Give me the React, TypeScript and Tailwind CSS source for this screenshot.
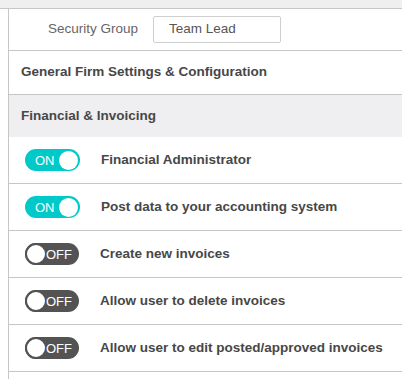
const font = { fontFamily: '"Liberation Sans", Arial, sans-serif' }

interface Permission {
  label: string
  on: boolean
}

const permissions: Permission[] = [
  { label: "Financial Administrator", on: true },
  { label: "Post data to your accounting system", on: true },
  { label: "Create new invoices", on: false },
  { label: "Allow user to delete invoices", on: false },
  { label: "Allow user to edit posted/approved invoices", on: false },
]

function Toggle({ on }: { on: boolean }) {
  if (on) {
    return (
      <div className="flex items-center justify-between w-[55px] h-[22px] rounded-full bg-[#00c9c9] pl-[10px] pr-[2px]">
        <span className="text-[13px] leading-none text-white">ON</span>
        <span className="w-[19px] h-[19px] rounded-full bg-white" />
      </div>
    )
  }
  return (
    <div className="flex items-center w-[54px] h-[22px] rounded-full bg-[#535353]">
      <span className="w-[22px] h-[22px] rounded-full bg-white border-[2px] border-[#535353] shrink-0" />
      <span className="text-[13px] leading-none text-white ml-[-1px]">OFF</span>
    </div>
  )
}

export default function App() {
  return (
    <div className="w-[402px] h-[379px] bg-white overflow-hidden" style={font}>
      <div className="h-[9px] bg-[#efeff0] border-b border-[#c6c6c6]" />
      <div className="flex h-[370px]">
        <div className="w-[8px] shrink-0" />
        <div className="flex-1 border-l border-[#c6c6c6]">
          {/* Security group */}
          <div className="h-[42px] flex items-center border-b border-[#c6c6c6] pl-[39px]">
            <span className="text-[13.5px] text-[#666]">Security Group</span>
            <div className="ml-[15px] w-[128px] h-[27px] border border-[#cfcfcf] rounded-[2px] flex items-center pl-[15px] text-[13.5px] text-[#555]">
              Team Lead
            </div>
          </div>

          <div className="h-[44px] flex items-center border-b border-[#c6c6c6] pl-[12px]">
            <span className="text-[13.5px] font-bold text-[#474747]">General Firm Settings &amp; Configuration</span>
          </div>

          <div className="h-[42px] flex items-center bg-[#efeff1] pl-[12px]">
            <span className="text-[13.5px] font-bold text-[#474747]">Financial &amp; Invoicing</span>
          </div>

          {permissions.map((p) => (
            <div key={p.label} className="h-[47px] flex items-center border-b border-[#c6c6c6] pl-[16px]">
              <Toggle on={p.on} />
              <span className="ml-[21px] text-[13.5px] font-bold text-[#474747]">{p.label}</span>
            </div>
          ))}
        </div>
      </div>
    </div>
  )
}
